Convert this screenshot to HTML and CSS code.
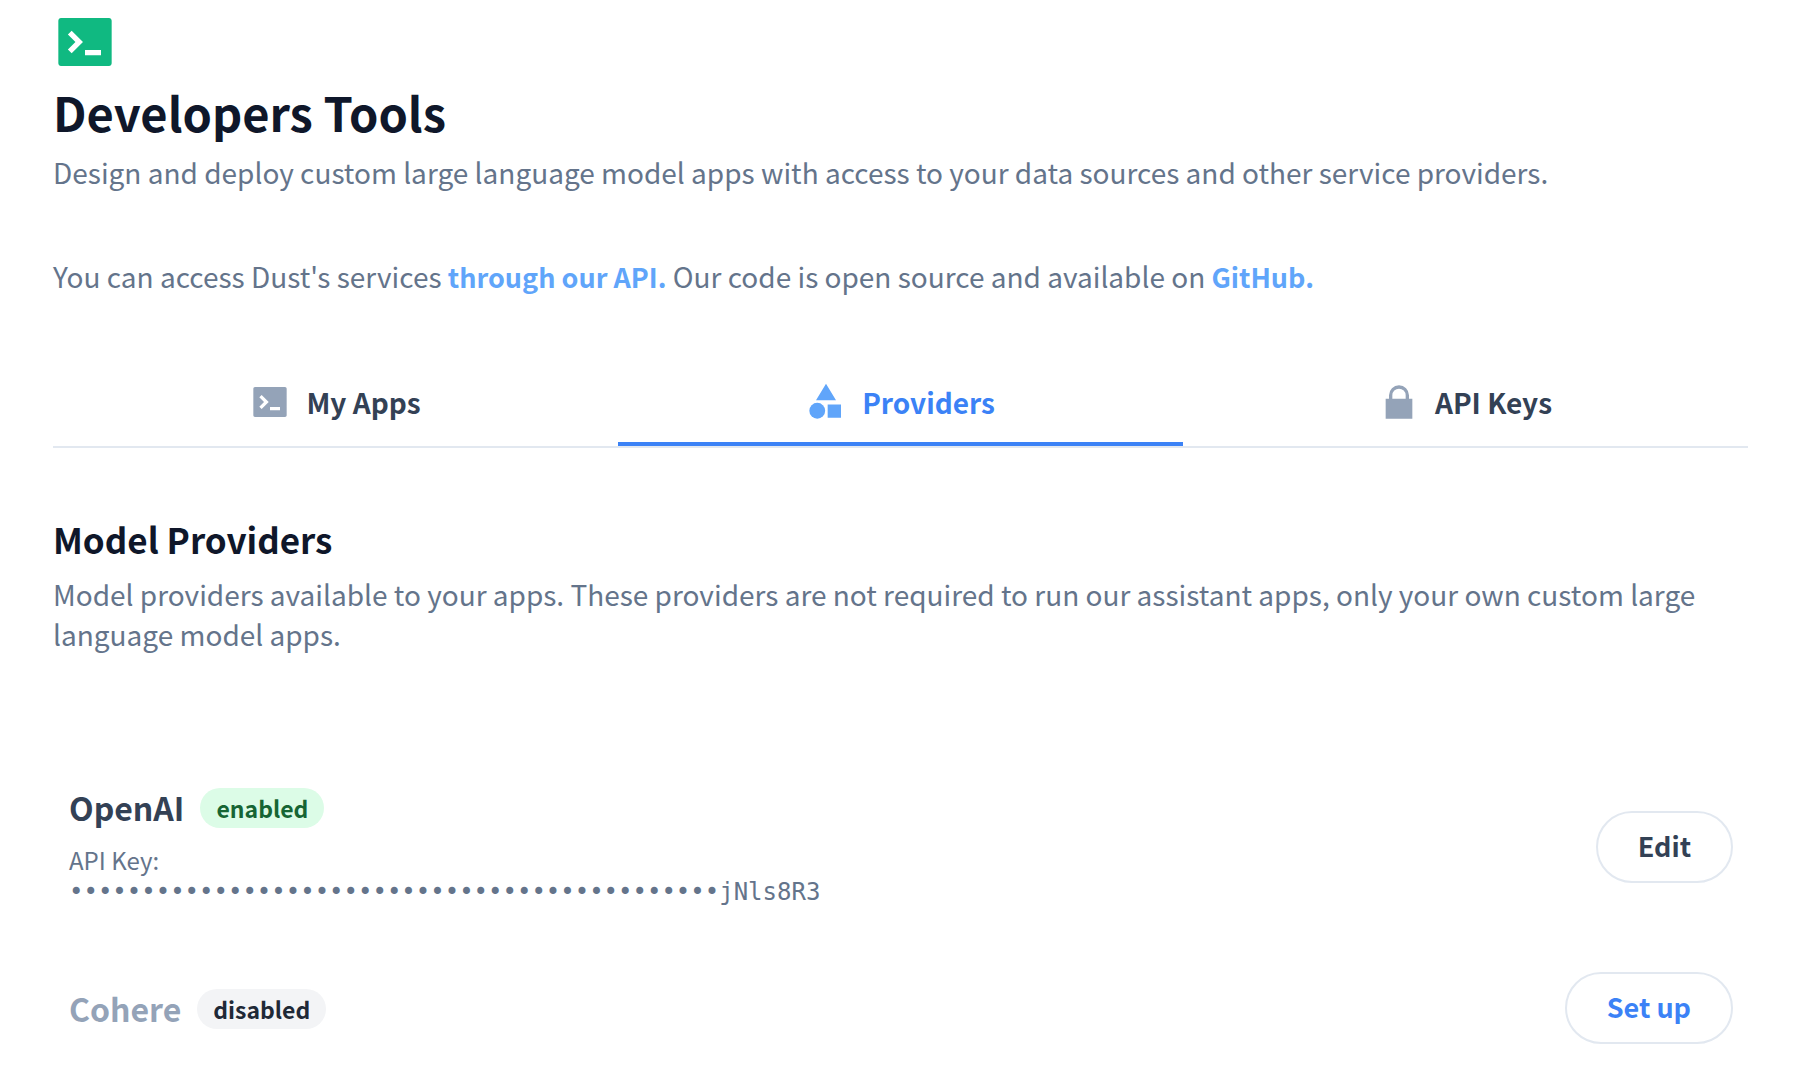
FILE: index.html
```html
<!DOCTYPE html>
<html lang="en">
<head>
  <meta charset="UTF-8">
  <meta name="viewport" content="width=device-width, initial-scale=1.0">
  <title>Developers Tools</title>
  <link rel="stylesheet" href="styles.css">
</head>
<body>
  <svg class="sprite" aria-hidden="true">
    <symbol id="icon-terminal" viewBox="0 0 24 24">
      <path d="M3 3H21C21.55 3 22 3.45 22 4V20C22 20.55 21.55 21 21 21H3C2.45 21 2 20.55 2 20V4C2 3.45 2.45 3 3 3ZM12 15V17H18V15H12ZM8.414 12L5.586 14.828L7 16.243L11.243 12L7 7.757L5.586 9.172L8.414 12Z"/>
    </symbol>
    <symbol id="icon-shapes" viewBox="0 0 24 24">
      <path d="M12 1L6 11H18L12 1ZM13 13.5V21.5H21V13.5H13Z"/>
      <circle cx="6.75" cy="17.25" r="4.75"/>
    </symbol>
    <symbol id="icon-lock" viewBox="0 0 24 24">
      <path d="M18 10H20V22H4V10H6V8A6 6 0 0 1 18 8V10ZM16 10V8A4 4 0 0 0 8 8V10H16Z"/>
    </symbol>
  </svg>

  <main class="page">
    <header class="header">
      <svg class="header-icon" aria-hidden="true"><use href="#icon-terminal"/></svg>
      <h1>Developers Tools</h1>
      <p>Design and deploy custom large language model apps with access to your data sources and other service providers.</p>
    </header>

    <p class="intro">You can access Dust's services <a href="#api">through our API.</a> Our code is open source and available on <a href="#github">GitHub.</a></p>

    <nav class="tabs">
      <a class="tab" href="#apps">
        <svg class="tab-icon" aria-hidden="true"><use href="#icon-terminal"/></svg>
        My Apps
      </a>
      <a class="tab active" href="#providers" aria-current="page">
        <svg class="tab-icon" aria-hidden="true"><use href="#icon-shapes"/></svg>
        Providers
      </a>
      <a class="tab" href="#keys">
        <svg class="tab-icon" aria-hidden="true"><use href="#icon-lock"/></svg>
        API Keys
      </a>
    </nav>

    <section id="providers">
      <h2>Model Providers</h2>
      <p>Model providers available to your apps. These providers are not required to run our assistant apps, only your own custom large language model apps.</p>

      <ul class="providers">
        <li class="provider">
          <div class="provider-info">
            <div class="provider-title">
              <h3>OpenAI</h3>
              <span class="badge enabled">enabled</span>
            </div>
            <div class="key-label">API Key:</div>
            <div class="key">•••••••••••••••••••••••••••••••••••••••••••••jNls8R3</div>
          </div>
          <button type="button">Edit</button>
        </li>
        <li class="provider off">
          <div class="provider-info">
            <div class="provider-title">
              <h3>Cohere</h3>
              <span class="badge">disabled</span>
            </div>
          </div>
          <button type="button" class="setup">Set up</button>
        </li>
      </ul>
    </section>
  </main>
</body>
</html>
```
FILE: styles.css
```css
* {
  box-sizing: border-box;
}
body {
  margin: 0;
  font-family: "Noto Sans CJK SC", "Noto Sans", sans-serif;
  font-size: 28px;
  line-height: 40px;
  color: #64748b;
  background-color: #ffffff;
}
h1, h2, h3, p, ul {
  margin: 0;
  padding: 0;
}
a {
  color: #60a5fa;
  font-weight: 700;
  text-decoration: none;
}
svg {
  fill: currentColor;
}
.sprite {
  display: none;
}
.page {
  padding: 10px 70px 24px 53px;
}
.header-icon {
  display: block;
  width: 64px;
  height: 64px;
  color: #10b981;
}
h1 {
  margin: 6px 0 8px;
  font-size: 47px;
  line-height: 64px;
  color: #0f172a;
}
.intro {
  margin-top: 64px;
}
.intro a {
  font-size: 27px;
}

/* tabs */
.tabs {
  display: flex;
  margin-top: 65px;
  border-bottom: 2px solid #e2e8f0;
}
.tab {
  flex: 1;
  display: flex;
  align-items: center;
  justify-content: center;
  gap: 16px;
  padding: 20px 0;
  border-bottom: 4px solid transparent;
  color: #334155;
}
.tab.active {
  border-color: #3b82f6;
  color: #3b82f6;
}
.tab-icon {
  width: 40px;
  height: 40px;
  color: #94a3b8;
}
.active .tab-icon {
  color: #60a5fa;
}

/* providers */
h2 {
  margin-top: 65px;
  margin-bottom: 9px;
  font-size: 35px;
  line-height: 52px;
  color: #0f172a;
}
.providers {
  margin-top: 132px;
  padding: 0 15px 0 16px;
  list-style: none;
}
.provider {
  display: flex;
  align-items: center;
  justify-content: space-between;
  margin-bottom: 64px;
}
.provider:last-child {
  margin-bottom: 0;
}
.provider-title {
  display: flex;
  align-items: flex-end;
  gap: 16px;
}
h3 {
  font-size: 32px;
  line-height: 42px;
  color: #334155;
}
.off h3 {
  color: #94a3b8;
}
.badge {
  padding: 0 16px;
  border-radius: 20px;
  font-size: 23px;
  font-weight: 700;
  background-color: #f3f4f6;
  color: #1f2937;
}
.badge.enabled {
  background-color: #dcfce7;
  color: #166534;
}
.key-label {
  margin-top: 16px;
  font-size: 24px;
  line-height: 32px;
}
.key {
  font-family: "DejaVu Sans Mono", monospace;
  font-size: 24px;
  line-height: 32px;
}
button {
  height: 72px;
  padding: 0 40px 4px;
  border: 2px solid #e2e8f0;
  border-radius: 36px;
  background-color: #ffffff;
  color: #334155;
  font-family: inherit;
  font-size: 27px;
  font-weight: 700;
}
button.setup {
  color: #3b82f6;
}
```
